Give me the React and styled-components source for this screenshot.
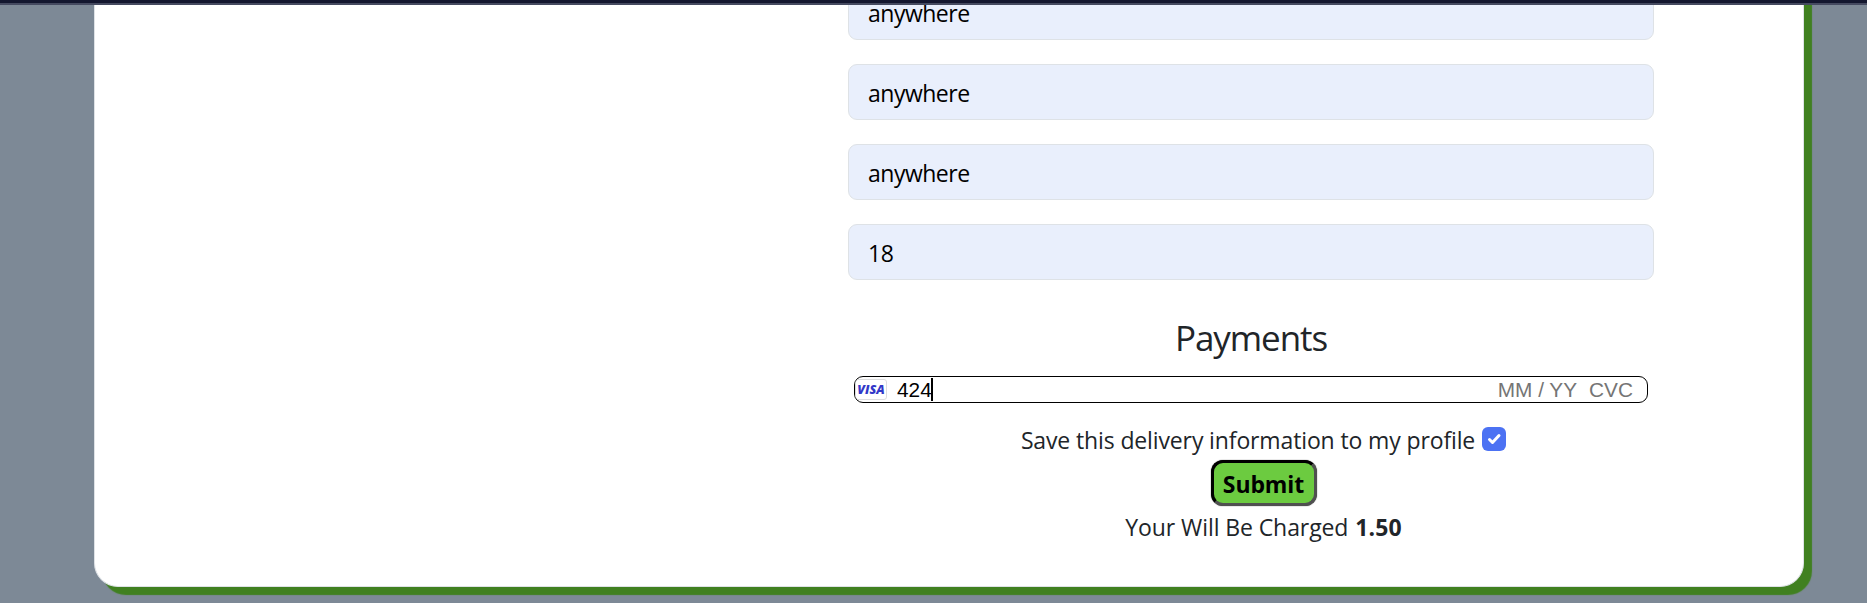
import React from 'react';
import styled, { createGlobalStyle } from 'styled-components';

const GlobalStyle = createGlobalStyle`
  *, *::before, *::after { box-sizing: border-box; }
  body {
    margin: 0;
    background: #7d8996;
    color: #212529;
    font-family: "Open Sans", "Noto Sans", sans-serif;
    font-size: 23px;
  }
`;

const Page = styled.div`
  height: 603px;
  overflow: hidden;
  display: flex;
  flex-direction: column;
`;

const TopBar = styled.header`
  flex: 0 0 5px;
  background: #14172f;
  border-bottom: 2px solid #454a60;
`;

const Viewport = styled.main`
  flex: 1;
  min-height: 0;
  overflow: hidden;
  display: flex;
  align-items: flex-end;
  padding: 0 63px 16px 94px;
`;

const Panel = styled.section`
  flex: 0 0 1710px;
  height: 622px;
  padding: 40px 0 0 753px;
  background: #fff;
  border: 1px solid #dee2e6;
  border-top: 0;
  border-radius: 0 0 24px 24px;
  box-shadow: 8px 8px 1px #408020;
`;

const Form = styled.form`
  width: 806px;
  display: flex;
  flex-direction: column;
`;

const Fields = styled.div`
  height: 275px;
  display: flex;
  flex-direction: column;
  justify-content: flex-end;
  gap: 24px;
`;

const Field = styled.input`
  flex: 0 0 56px;
  width: 100%;
  padding: 2px 18px 0 19px;
  border: 1px solid #dee2e6;
  border-radius: 9px;
  background: #e9effc;
  color: #000;
  font: inherit;
  letter-spacing: -0.5px;
  outline: none;
`;

const Heading = styled.h3`
  margin: 36px 0 16px;
  font-size: 35px;
  font-weight: 400;
  line-height: 44px;
  letter-spacing: -1.08px;
  text-align: center;
`;

const CardInput = styled.div`
  height: 27px;
  margin: 0 6px;
  padding: 0 14px 0 0;
  display: flex;
  align-items: center;
  overflow: hidden;
  border: 1px solid #000;
  border-radius: 9px;
  font-family: "Liberation Sans", Arial, sans-serif;
  font-size: 20.8px;
  line-height: 25px;
`;

const Brand = styled.span`
  width: 32px;
  height: 21px;
  display: flex;
  align-items: center;
  justify-content: center;
  border: 1px solid #dddddf;
  border-radius: 3px;
  color: #3238c8;
  font: italic 800 12.5px/19px "Open Sans", sans-serif;
  letter-spacing: 0;
`;

const CardNumber = styled.span`
  margin-left: 10px;
  color: #000;
`;

const Caret = styled.span`
  width: 2px;
  height: 23px;
  margin-left: -1px;
  background: #000;
`;

const CardHints = styled.span`
  margin-left: auto;
  display: flex;
  gap: 12px;
  color: #757575;
`;

const Actions = styled.div`
  margin-top: 21px;
  padding-left: 25px;
  display: flex;
  flex-direction: column;
  align-items: center;
`;

const SaveRow = styled.label`
  height: 32px;
  display: flex;
  align-items: center;
  gap: 7px;
  letter-spacing: -0.13px;
  white-space: nowrap;
`;

const Checkbox = styled.span`
  width: 24px;
  height: 24px;
  margin-top: -2px;
  display: flex;
  align-items: center;
  justify-content: center;
  border-radius: 6px;
  background: #4c72f3;
`;

const SubmitButton = styled.button`
  width: 106px;
  height: 46px;
  margin: 4px 0;
  padding: 2px 0 0;
  border: 3px solid;
  border-color: #000 #505050 #505050 #000;
  border-radius: 12px;
  background: #6ccb40;
  box-shadow: 0 0 1px #222;
  color: #000;
  font: 700 23px/36px "Open Sans", sans-serif;
  letter-spacing: -0.1px;
`;

const Charge = styled.p`
  margin: 0;
  line-height: 34px;
  letter-spacing: -0.09px;
  white-space: nowrap;
`;

const Amount = styled.strong`
  margin-left: 1px;
  font-weight: 700;
  letter-spacing: 0.1px;
`;

const values = ['anywhere', 'anywhere', 'anywhere', '18'];

export default function App() {
  return (
    <Page>
      <GlobalStyle />
      <TopBar />
      <Viewport>
        <Panel>
          <Form>
            <Fields>
              {values.map((value, i) => (
                <Field key={i} defaultValue={value} />
              ))}
            </Fields>
            <Heading>Payments</Heading>
            <CardInput>
              <Brand>VISA</Brand>
              <CardNumber>424</CardNumber>
              <Caret />
              <CardHints>
                <span>MM / YY</span>
                <span>CVC</span>
              </CardHints>
            </CardInput>
            <Actions>
              <SaveRow>
                Save this delivery information to my profile
                <Checkbox>
                  <svg width="24" height="24" viewBox="0 0 24 24" fill="none">
                    <path d="M7.5 12.5l3 3 6.5-7" stroke="#fff" strokeWidth="3" strokeLinecap="round" strokeLinejoin="round" />
                  </svg>
                </Checkbox>
              </SaveRow>
              <SubmitButton type="button">Submit</SubmitButton>
              <Charge>
                Your Will Be Charged <Amount>1.50</Amount>
              </Charge>
            </Actions>
          </Form>
        </Panel>
      </Viewport>
    </Page>
  );
}
